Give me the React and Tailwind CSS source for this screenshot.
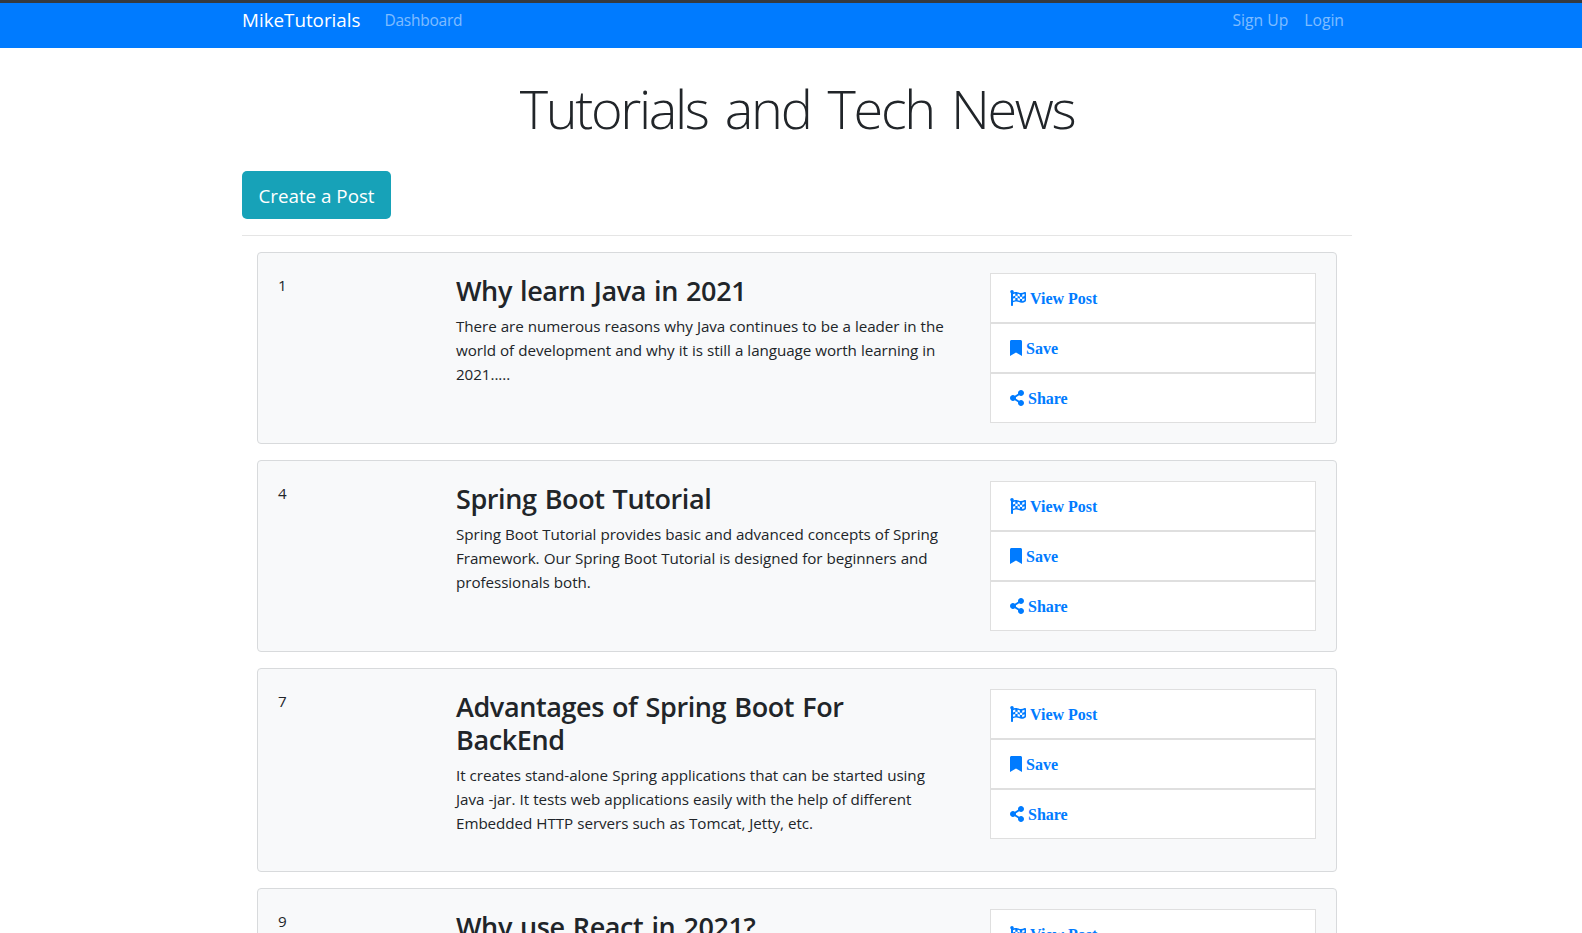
import { FaFlagCheckered, FaBookmark, FaShareAlt } from "react-icons/fa";

const posts = [
  {
    id: 1,
    title: "Why learn Java in 2021",
    text: "There are numerous reasons why Java continues to be a leader in the world of development and why it is still a language worth learning in 2021.....",
  },
  {
    id: 4,
    title: "Spring Boot Tutorial",
    text: "Spring Boot Tutorial provides basic and advanced concepts of Spring Framework. Our Spring Boot Tutorial is designed for beginners and professionals both.",
  },
  {
    id: 7,
    title: "Advantages of Spring Boot For BackEnd",
    text: "It creates stand-alone Spring applications that can be started using Java -jar. It tests web applications easily with the help of different Embedded HTTP servers such as Tomcat, Jetty, etc.",
  },
  {
    id: 9,
    title: "Why use React in 2021?",
    text: "",
  },
];

const actions = [
  { label: "View Post", Icon: FaFlagCheckered, width: "w-4" },
  { label: "Save", Icon: FaBookmark, width: "w-3" },
  { label: "Share", Icon: FaShareAlt, width: "w-3.5" },
];

function NavBar() {
  return (
    <nav className="h-12 border-t-[3px] border-[#343a40] bg-[#007bff]">
      <div className="ml-[242px] flex w-[1110px] items-start">
        <a className="text-[18.8px] leading-[35px] text-white">MikeTutorials</a>
        <a className="ml-6 text-[15.5px] leading-[34px] tracking-[-0.25px] text-white/50">Dashboard</a>
        <div className="ml-auto flex gap-4 pr-2 text-[15.7px] leading-[34px] text-white/50">
          <a>Sign Up</a>
          <a>Login</a>
        </div>
      </div>
    </nav>
  );
}

function PostCard({ post }) {
  return (
    <article className="mb-4 grid grid-cols-[148px_504px_326px] gap-x-[30px] rounded-[4px] border border-[#d8dadc] bg-[#f8f9fa] p-5">
      <span className="text-[15.2px] leading-6">{post.id}</span>
      <div>
        <h3 className="mb-[7px] pt-px pr-4 text-[27px] leading-[33px] font-semibold tracking-[-0.4px] [word-spacing:1.5px]">{post.title}</h3>
        <p className="mb-4 pr-2 text-[15.2px] leading-6 tracking-[-0.06px] [word-spacing:0.2px]">{post.text}</p>
      </div>
      <ul className="font-['Liberation_Serif',serif]">
        {actions.map(({ label, Icon, width }) => (
          <li key={label} className="flex h-[50px] items-center border border-[#dfdfdf] bg-white pr-5 pl-[19px] text-[#007bff]">
            <Icon className={`mr-1 h-4 shrink-0 ${width}`} />
            <span className="pt-[2px] text-base leading-6 font-bold">{label}</span>
          </li>
        ))}
      </ul>
    </article>
  );
}

export default function App() {
  return (
    <div className="h-[933px] overflow-hidden bg-white font-['Open_Sans',sans-serif] text-[#212529]">
      <NavBar />
      <main className="ml-[242px] w-[1110px]">
        <h1 className="pt-6 text-center text-[54px] leading-[72px] font-light tracking-[-2.35px] [word-spacing:5.5px]">Tutorials and Tech News</h1>
        <button className="mt-[27px] block h-12 w-[149px] rounded-[5px] bg-[#17a2b8] pt-[2px] text-[18.8px] whitespace-nowrap text-white">
          Create a Post
        </button>
        <hr className="my-4 border-[#e5e5e5]" />
        <section className="px-[15px]">
          {posts.map((post) => (
            <PostCard key={post.id} post={post} />
          ))}
        </section>
      </main>
    </div>
  );
}
